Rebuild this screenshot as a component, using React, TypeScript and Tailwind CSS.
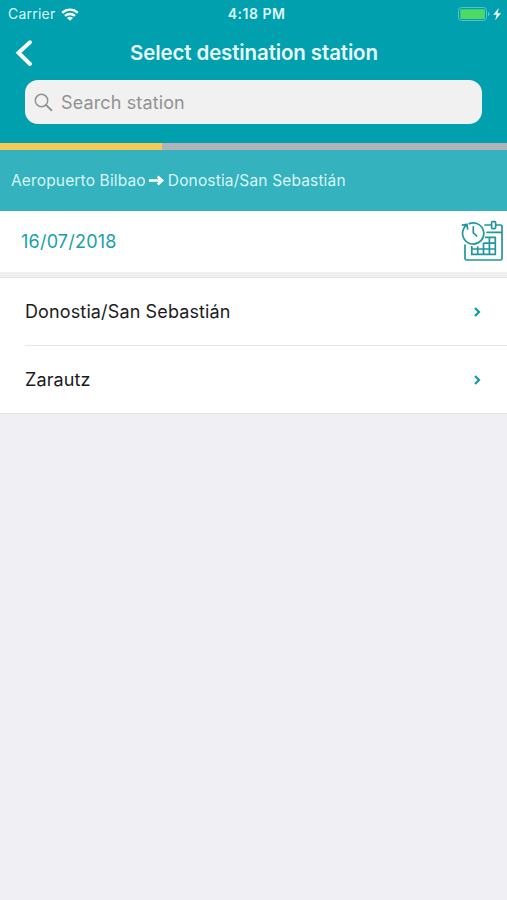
const stations = ['Donostia/San Sebastián', 'Zarautz'];

function StatusBar() {
  return (
    <div className="flex h-7 items-center pl-[8px] pr-[5px] text-[#dcf6f8]">
      <div className="flex flex-1 items-center gap-[6px]">
        <span className="text-[14px] leading-7 tracking-[0.22px]">Carrier</span>
        <svg className="h-[13px] w-[18px]" viewBox="0 0 18 13" fill="none" stroke="#fff" strokeWidth="2.4">
          <path d="M1.2 4.8C5.6.6 12.4.6 16.8 4.8" />
          <path d="M4 7.9C6.8 5.3 11.2 5.3 14 7.9" />
          <path d="M9 12.8 6 9.9C7.8 8.5 10.2 8.5 12 9.9Z" fill="#fff" stroke="none" />
        </svg>
      </div>
      <span className="pl-[3px] text-[14px] font-semibold leading-7 tracking-[0.5px]">4:18 PM</span>
      <div className="flex flex-1 items-center justify-end">
        <svg className="h-[14px] w-[44px]" viewBox="0 0 44 14" fill="none">
          <rect x=".5" y=".5" width="28" height="13" rx="3" stroke="#5fbfc8" />
          <rect x="2.3" y="2.3" width="24.6" height="9.6" rx="1" fill="#4cd964" />
          <path d="M30 5v4c2-.8 2-3.2 0-4Z" fill="#70c7cf" />
          <path d="M40.8 1 35.2 7.8h3.4l-1.4 5.4 5.8-7h-3.5Z" fill="#fff" />
        </svg>
      </div>
    </div>
  );
}

function CalendarIcon() {
  return (
    <svg className="mb-px h-[42px] w-[42px]" viewBox="0 0 42 42" fill="none" stroke="#20969f" strokeWidth="1.7" strokeLinecap="round" strokeLinejoin="round">
      <path d="M4 25v13.4A1.6 1.6 0 0 0 5.6 40h33.8a1.6 1.6 0 0 0 1.6-1.6V6.6A1.6 1.6 0 0 0 39.4 5H35M30.500 5H24M26 12.4h15" />
      <rect x="30.6" y="1.6" width="4" height="7" rx="1" />
      <path d="M8.3 3.6A10.6 10.6 0 1 1 2.3 9.6C2.9 7.5 4 5.900 5.600 4.700M1.400 5.200 6 4.300l.6 4.500M12.300 6.800v6l3.400 3.200" />
      <path d="M10.800 26.500v7.900h23.500V17.400h-9.500M23 23.200h11.300M10.800 29h23.500M16.700 27v7.400M22.500 23.500v10.900M28.400 17.400v17" />
    </svg>
  );
}

function SearchField() {
  return (
    <label className="mx-[25px] mt-[2px] flex h-11 items-center rounded-[13px] bg-[#f1f1f1] pl-[9px]">
      <svg className="mr-[8px] h-[19px] w-[19px]" viewBox="0 0 19 19" fill="none" stroke="#929292" strokeWidth="1.5" strokeLinecap="round">
        <circle cx="7.5" cy="7.5" r="6.2" />
        <path d="m12 12 5.5 5.2" strokeWidth="1.9" />
      </svg>
      <input
        className="min-w-0 flex-1 bg-transparent text-[18px] tracking-[0.13px] outline-none placeholder:text-[#929292]"
        placeholder="Search station"
      />
    </label>
  );
}

export default function App() {
  return (
    <div className="flex h-[900px] w-[507px] flex-col overflow-hidden bg-[#efeff4] font-['Inter','Liberation_Sans',sans-serif]">
      <header className="h-[143px] shrink-0 bg-[#00a0af]">
        <StatusBar />
        <div className="flex h-[50px] items-center">
          <button className="flex w-[60px] pl-[15px]" aria-label="Back">
            <svg className="h-[27px] w-[18px]" viewBox="0 0 18 27" fill="none" stroke="#fff" strokeWidth="3.9" strokeLinecap="round">
              <path d="M15 2.300 3.500 12.700 15 24" />
            </svg>
          </button>
          <h1 className="flex-1 whitespace-nowrap pl-px pt-px text-center text-[20.5px] font-semibold tracking-[-0.13px] text-[#e9fbfc]">
            Select destination station
          </h1>
          <div className="w-[60px]" />
        </div>
        <SearchField />
      </header>
      <div className="h-[7px] shrink-0 bg-[#b3b3b7]">
        <div className="h-full w-[162px] bg-[#f8c958]" />
      </div>
      <div className="flex h-[61px] shrink-0 items-center bg-[#34b2be] pl-[11px] pt-px text-[15.5px] tracking-[0.15px] text-[#d8f5f7]">
        <span>Aeropuerto Bilbao</span>
        <svg className="ml-[3px] mr-[4px] h-[12px] w-[15px]" viewBox="0 0 15 12" fill="none" stroke="#fff" strokeWidth="2.4">
          <path d="M0 5.500h13M8.700 1.500 13.200 5.500l-4.500 4" />
        </svg>
        <span>Donostia/San Sebastián</span>
      </div>
      <div className="flex h-[61px] shrink-0 items-center justify-between bg-white pl-[21px] pr-[4px]">
        <span className="text-[18px] tracking-[0.22px] text-[#18a0aa]">16/07/2018</span>
        <CalendarIcon />
      </div>
      <div className="h-[6px] shrink-0 border-b border-[#e4e4e8] bg-[#efeff2]" />
      <ul className="shrink-0 border-b border-[#e2e2e5] bg-white">
        {stations.map((name) => (
          <li key={name} className="group pl-[25px]">
            <div className="flex h-[68px] items-center justify-between border-b border-[#e8e8ea] pr-[26px] group-last:h-[67px] group-last:border-b-0">
              <span className="text-[18px] tracking-[0.13px] text-[#1c1c1c]">{name}</span>
              <svg className="h-[10px] w-[8px]" viewBox="0 0 8 10" fill="none" stroke="#129aa4" strokeWidth="2.2">
                <path d="m2 1 4 4-4 4" />
              </svg>
            </div>
          </li>
        ))}
      </ul>
    </div>
  );
}
